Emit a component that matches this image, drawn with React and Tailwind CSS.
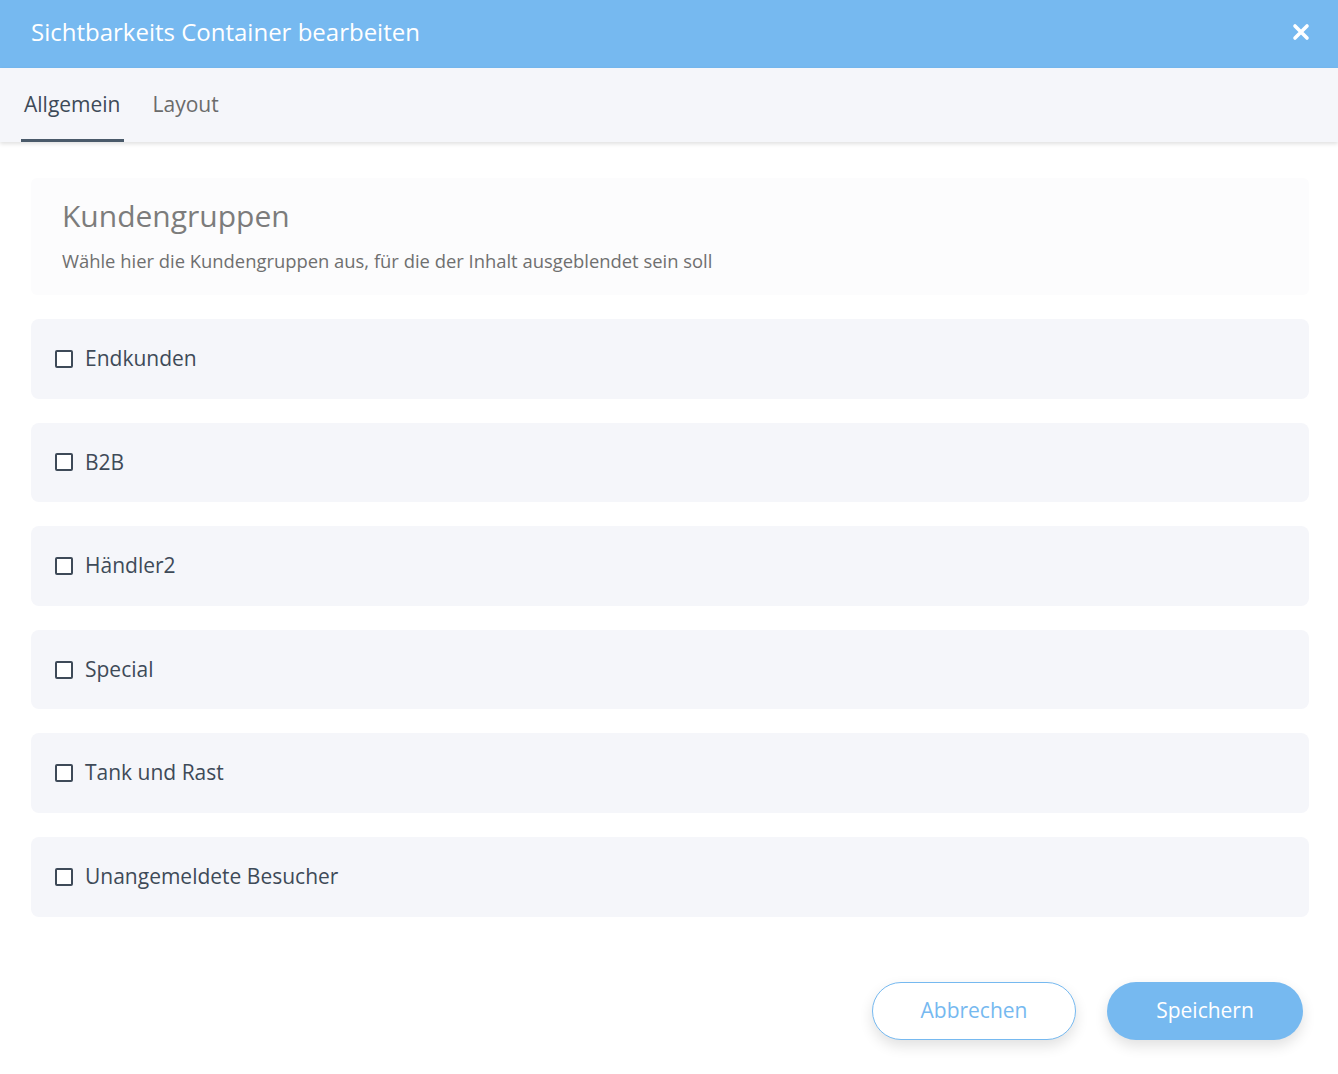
import React, { useState } from 'react';

const groups = ['Endkunden', 'B2B', 'Händler2', 'Special', 'Tank und Rast', 'Unangemeldete Besucher'];

const App = () => {
  const [tab, setTab] = useState('Allgemein');
  const [checked, setChecked] = useState({});

  return (
    <div className="min-h-screen bg-white font-['Open_Sans',sans-serif]">
      <header className="flex h-[68px] items-center justify-between bg-[#76b9f0] pb-[4px] pl-[31px] pr-[28px]">
        <h1 className="text-[24px] text-white">Sichtbarkeits Container bearbeiten</h1>
        <button className="text-white">
          <svg width="18" height="18" viewBox="0 0 18 18" fill="none" stroke="currentColor" strokeWidth="3.6" strokeLinecap="round">
            <path d="M3 3 L15 15 M15 3 L3 15" />
          </svg>
        </button>
      </header>

      <nav className="flex h-[74px] items-stretch gap-[26px] bg-[#f5f6fa] pl-[21px] shadow-[0_2px_4px_rgba(0,0,0,0.12)]">
        {['Allgemein', 'Layout'].map(t => (
          <button
            key={t}
            onClick={() => setTab(t)}
            className={
              t === tab
                ? 'border-b-[3px] border-[#4a5a6a] px-[3px] pt-[3px] text-[21px] text-[#3e4a58]'
                : 'border-b-[3px] border-transparent px-[3px] pt-[3px] text-[21px] text-[#6b6b6b]'
            }
          >
            {t}
          </button>
        ))}
      </nav>

      <main className="pl-[31px] pr-[29px] pt-[36px]">
        <section className="rounded-[6px] bg-[#fcfcfd] px-[31px] pb-[21px] pt-[18px]">
          <h2 className="text-[30px] leading-[40px] text-[#7c7c7c]">Kundengruppen</h2>
          <p className="mt-[11px] text-[18.4px] leading-[27px] text-[#6f6f6f]">
            Wähle hier die Kundengruppen aus, für die der Inhalt ausgeblendet sein soll
          </p>
        </section>

        <div className="mt-[24px] flex flex-col gap-[24px]">
          {groups.map(g => (
            <label key={g} className="flex h-[79.6px] cursor-pointer items-center gap-[12px] rounded-[8px] bg-[#f5f6fa] px-[24px]">
              <input
                type="checkbox"
                checked={!!checked[g]}
                onChange={() => setChecked({ ...checked, [g]: !checked[g] })}
                className="h-[18px] w-[18px] appearance-none rounded-[2px] border-2 border-[#3e4a58] bg-white checked:bg-[#3e4a58]"
              />
              <span className="text-[21px] text-[#3e4a58]">{g}</span>
            </label>
          ))}
        </div>

        <div className="mt-[65px] flex justify-end gap-[31px] pr-[6px]">
          <button className="h-[58px] w-[204px] rounded-full border border-[#76b9f0] bg-white text-[21px] text-[#76b9f0] shadow-[0_6px_14px_rgba(0,0,0,0.12)]">
            Abbrechen
          </button>
          <button className="h-[58px] w-[196px] rounded-full bg-[#76b9f0] text-[21px] text-white shadow-[0_6px_14px_rgba(0,0,0,0.12)]">
            Speichern
          </button>
        </div>
      </main>
    </div>
  );
};

export default App;
